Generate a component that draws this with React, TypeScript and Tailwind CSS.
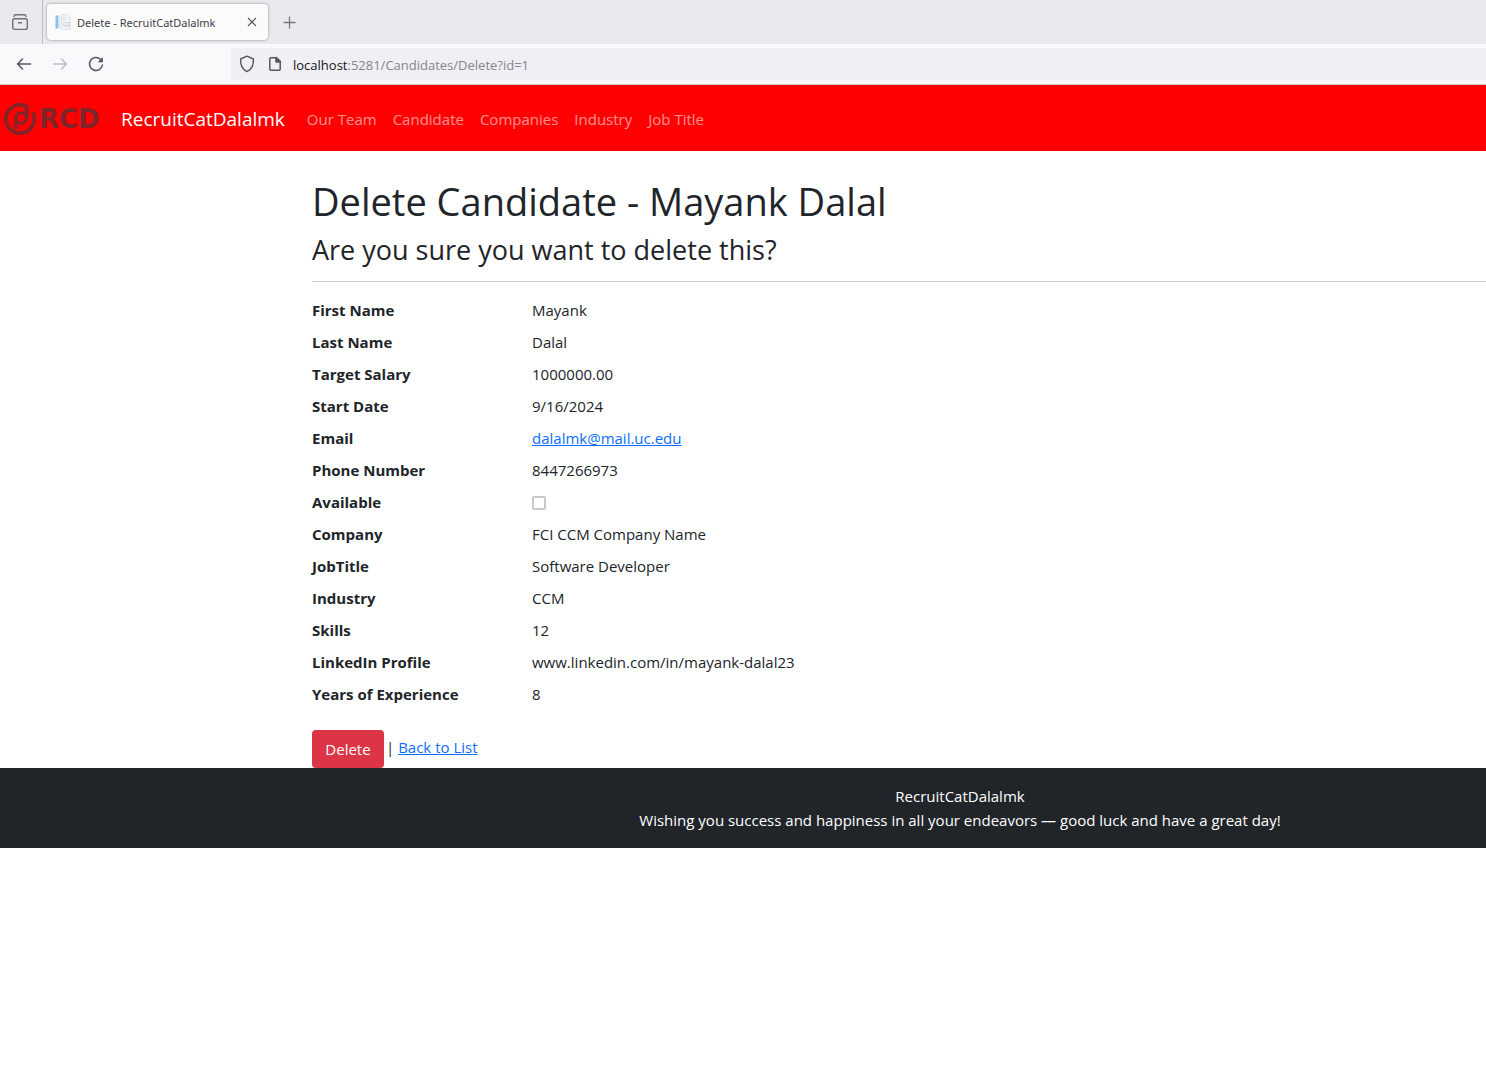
import React from "react";

const navLinks = ["Our Team", "Candidate", "Companies", "Industry", "Job Title"];

const details: { label: string; value: React.ReactNode }[] = [
  { label: "First Name", value: "Mayank" },
  { label: "Last Name", value: "Dalal" },
  { label: "Target Salary", value: "1000000.00" },
  { label: "Start Date", value: "9/16/2024" },
  {
    label: "Email",
    value: (
      <a href="mailto:dalalmk@mail.uc.edu" className="text-[#0d6efd] underline">
        dalalmk@mail.uc.edu
      </a>
    ),
  },
  { label: "Phone Number", value: "8447266973" },
  {
    label: "Available",
    value: (
      <input
        type="checkbox"
        disabled
        aria-label="Available"
        className="mt-[6px] block size-[14px] appearance-none rounded-[2px] border-2 border-[#c7c7cf] bg-white"
      />
    ),
  },
  { label: "Company", value: "FCI CCM Company Name" },
  { label: "JobTitle", value: "Software Developer" },
  { label: "Industry", value: "CCM" },
  { label: "Skills", value: "12" },
  { label: "LinkedIn Profile", value: "www.linkedin.com/in/mayank-dalal23" },
  { label: "Years of Experience", value: "8" },
];

function TabStrip() {
  return (
    <div className="flex h-11 items-center bg-[#eaeaee]">
      <button aria-label="Recent browsing" className="flex h-full w-[43px] shrink-0 items-center justify-center border-r border-[#bdbdc3] pr-[2px] text-[#6f6f78]">
        <svg width="18" height="18" viewBox="0 0 18 18" fill="none" stroke="currentColor" strokeWidth="1.4" strokeLinecap="round">
          <path d="M3 3.500c0-1 .6-1.700 1.700-1.700h8.600c1.100 0 1.700.7 1.700 1.700" />
          <rect x="1.700" y="5.800" width="14.600" height="10.600" rx="2" />
          <path d="M7.500 9.700h3" />
        </svg>
      </button>
      <div className="ml-1 flex h-9 w-[221px] items-center rounded bg-[#fbfbfb] px-2 shadow-[0_0_3px_rgba(0,0,0,0.4)]">
        <svg width="16" height="16" viewBox="0 0 16 16" fill="none" className="shrink-0">
          <path d="M.5 1.500h3v13h-3z" fill="#8fc0e2" />
          <path d="M3.500 1.500h2v13h-2z" fill="#dce9f2" />
          <path d="M6.500.5h6l3 3v12h-9z" fill="#f1f3f5" stroke="#dfe3e7" />
          <path d="M7.500 3.500h4M7.500 5.500h4M9 12.500h5" stroke="#dde3e9" />
          <path d="M8.500 8.500h6v3h-6z" fill="#e9eef3" stroke="#d0d9e2" />
        </svg>
        <span className="ml-[6px] whitespace-nowrap pt-[2px] font-['Noto_Sans',sans-serif] text-[11px] text-[#3f3f46]">Delete - RecruitCatDalalmk</span>
        <button aria-label="Close tab" className="ml-auto text-[#55555e]">
          <svg width="16" height="16" viewBox="0 0 16 16" stroke="currentColor" strokeWidth="1.100">
            <path d="M4 4l8 8M12 4l-8 8" />
          </svg>
        </button>
      </div>
      <button aria-label="New tab" className="ml-[14px] text-[#77777f]">
        <svg width="14" height="14" viewBox="0 0 14 14" stroke="currentColor" strokeWidth="1.300">
          <path d="M7.500 1.500v12M1.500 7.500h12" />
        </svg>
      </button>
    </div>
  );
}

function Toolbar() {
  return (
    <div className="flex h-[41px] items-center border-b border-[#c9c9ce] bg-[#f9f9fb] text-[#55555e]">
      <div className="flex w-[231px] shrink-0 gap-5 pl-4">
        <button aria-label="Back">
          <svg width="16" height="16" viewBox="0 0 16 16" fill="none" stroke="currentColor" strokeWidth="1.500" strokeLinecap="round" strokeLinejoin="round">
            <path d="M14.500 8H1.500M6.500 3L1.500 8l5 5" />
          </svg>
        </button>
        <button aria-label="Forward" disabled className="text-[#bcbcc2]">
          <svg width="16" height="16" viewBox="0 0 16 16" fill="none" stroke="currentColor" strokeWidth="1.500" strokeLinecap="round" strokeLinejoin="round">
            <path d="M1.500 8h13M9.500 3l5 5-5 5" />
          </svg>
        </button>
        <button aria-label="Reload">
          <svg width="16" height="16" viewBox="0 0 16 16" fill="none" stroke="currentColor" strokeWidth="1.500" strokeLinecap="round">
            <path d="M14.400 9A6.500 6.500 0 1 1 12.500 3.300" />
            <path d="M14.900.9v5.300H9.600z" fill="currentColor" stroke="none" />
          </svg>
        </button>
      </div>
      <div className="flex h-8 flex-1 items-center rounded-l bg-[#f0f0f4] pl-2">
        <svg width="16" height="18" viewBox="0 0 16 18" fill="none" stroke="currentColor" strokeWidth="1.400" strokeLinejoin="round" className="shrink-0">
          <path d="M8 1.200L14.400 4c.4 5.600-1.800 10.400-6.400 12.600C3.400 14.400 1.200 9.600 1.600 4z" />
        </svg>
        <svg width="14" height="16" viewBox="0 0 14 16" fill="none" stroke="currentColor" strokeWidth="1.500" strokeLinejoin="round" className="ml-[13px] shrink-0">
          <path d="M2.800 1.700h5.700l3.700 3.700v7.900a1 1 0 0 1-1 1H2.800a1 1 0 0 1-1-1V2.700a1 1 0 0 1 1-1z" />
          <path d="M8 1.500v4.400h4.400z" fill="currentColor" />
        </svg>
        <span className="ml-[11px] pt-[2px] text-[13px] text-[#85858c]">
          <span className="text-[#15141a]">localhost</span>:5281/Candidates/Delete?id=1
        </span>
      </div>
    </div>
  );
}

function Logo() {
  return (
    <a href="#" aria-label="RCD" className="flex h-10 w-[100px] shrink-0 items-center text-[#7f2428]">
      <svg width="32" height="32" viewBox="0 0 32 32" fill="none" stroke="currentColor" strokeWidth="3.600" className="shrink-0">
        <path d="M22.500 15V3.800C20.500 2.400 18 1.800 16 1.800A14.200 14.200 0 1 0 28.600 9.400" />
        <circle cx="17.200" cy="15" r="5.300" strokeWidth="3" />
        <path d="M12 15v11" strokeWidth="3.400" />
      </svg>
      <span className="ml-[3px] font-['DejaVu_Sans',sans-serif] text-[26px] font-bold">RCD</span>
    </a>
  );
}

export default function App() {
  return (
    <div className="min-h-screen overflow-x-hidden bg-white font-['Open_Sans','Noto_Sans',sans-serif] text-[15px] leading-6 text-[#212529]">
      <TabStrip />
      <Toolbar />
      <nav className="flex h-[66px] items-center bg-[#ff0000] pl-1 pt-[2px]">
        <Logo />
        <a href="#" className="ml-[17px] text-[19px] text-white">RecruitCatDalalmk</a>
        <div className="ml-[22px] flex gap-4">
          {navLinks.map((link) => (
            <a key={link} href="#" className="whitespace-nowrap text-white/55">{link}</a>
          ))}
        </div>
      </nav>
      <main className="pl-[312px] pt-[26px]">
        <h1 className="mb-2 text-[38px] leading-[48px]">Delete Candidate - Mayank Dalal</h1>
        <h3 className="text-[27px] leading-[34px]">Are you sure you want to delete this?</h3>
        <hr className="mb-[13px] mt-[14px] border-[#c7c8c9]" />
        <dl className="grid grid-cols-[220px_1fr] gap-y-2 pt-[3px]">
          {details.map(({ label, value }) => (
            <React.Fragment key={label}>
              <dt className="font-bold">{label}</dt>
              <dd className="h-6">{value}</dd>
            </React.Fragment>
          ))}
        </dl>
        <form className="mt-6 flex items-start" onSubmit={(e) => e.preventDefault()}>
          <button type="submit" className="h-[38px] w-[72px] rounded-[4px] bg-[#dc3545] text-white">Delete</button>
          <span className="pl-[2px] pt-[5px]">
            | <a href="#" className="text-[#0d6efd] underline">Back to List</a>
          </span>
        </form>
      </main>
      <footer className="bg-[#212529] py-4 pl-[434px] text-center text-white">
        <p>RecruitCatDalalmk</p>
        <p>Wishing you success and happiness in all your endeavors — good luck and have a great day!</p>
      </footer>
    </div>
  );
}
